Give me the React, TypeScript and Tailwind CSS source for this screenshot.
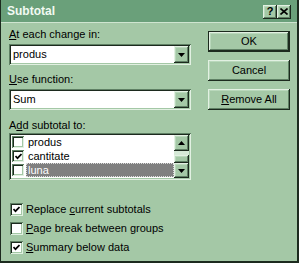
const raised =
  "shadow-[inset_-1px_-1px_#1c2a1e,inset_1px_1px_#e2f0e2,inset_-2px_-2px_#5f8064,inset_2px_2px_#b9d8bb]";
const sunken =
  "shadow-[inset_1px_1px_#5f8064,inset_-1px_-1px_#e2f0e2,inset_2px_2px_#1c2a1e,inset_-2px_-2px_#a4c8a6]";

function Arrow({ up }: { up?: boolean }) {
  return (
    <svg width="7" height="4" viewBox="0 0 7 4">
      <path d={up ? "M3.5 0 L7 4 L0 4 Z" : "M0 0 L7 0 L3.5 4 Z"} fill="#000" />
    </svg>
  );
}

function Check({ on, size = 13 }: { on?: boolean; size?: number }) {
  return (
    <div
      className={"bg-white flex items-center justify-center shrink-0 " + sunken}
      style={{ width: size, height: size }}
    >
      {on && (
        <svg width="7" height="7" viewBox="0 0 7 7">
          <path d="M0.5 3 L2.5 5.2 L6.5 1" stroke="#000" strokeWidth="1.7" fill="none" />
        </svg>
      )}
    </div>
  );
}

function Combo({ value }: { value: string }) {
  return (
    <div className={"h-[21px] w-[182px] bg-white flex items-center pl-[4px] pr-[2px] " + sunken}>
      <span className="flex-1">{value}</span>
      <div className={"w-[15px] h-[17px] bg-[#a4c8a6] flex items-center justify-center " + raised}>
        <Arrow />
      </div>
    </div>
  );
}

function Button({ children, isDefault }: { children: React.ReactNode; isDefault?: boolean }) {
  return (
    <div
      className={
        "h-[21px] w-[82px] flex items-center justify-center " +
        (isDefault ? "border border-[#1c2a1e] " : "") +
        raised
      }
    >
      {children}
    </div>
  );
}

export default function App() {
  const items = [
    { name: "produs", on: false },
    { name: "cantitate", on: true },
    { name: "luna", on: false, selected: true },
  ];

  return (
    <div className="w-[299px] h-[263px] bg-[#a4c8a6] font-['Liberation_Sans',Arial,sans-serif] text-[11px] leading-[13px] text-black border-l border-r-2 border-b-2 border-[#1c2a1e] flex flex-col overflow-hidden">
      {/* title bar */}
      <div className="h-[22px] bg-[#6aa07a] flex items-center pl-[6px] pr-[6px] shrink-0">
        <span className="font-bold text-[12px] text-[#f2faf2]">Subtotal</span>
        <div className="ml-auto flex mt-[1px]">
          <div className={"w-[14px] h-[14px] bg-[#a4c8a6] flex items-center justify-center font-bold text-[11px] " + raised}>
            ?
          </div>
          <div className={"w-[14px] h-[14px] bg-[#a4c8a6] flex items-center justify-center " + raised}>
            <svg width="8" height="7" viewBox="0 0 8 7">
              <path d="M0.5 0.5 L7.5 6.5 M7.5 0.5 L0.5 6.5" stroke="#000" strokeWidth="1.6" />
            </svg>
          </div>
        </div>
      </div>
      <div className="h-px bg-[#cfe5d0] shrink-0" />

      <div className="flex pl-[8px]">
        {/* left column */}
        <div className="w-[182px] flex flex-col">
          <p className="mt-[5px]">
            <u>A</u>t each change in:
          </p>
          <div className="mt-[3px]">
            <Combo value="produs" />
          </div>

          <p className="mt-[8px]">
            <u>U</u>se function:
          </p>
          <div className="mt-[3px]">
            <Combo value="Sum" />
          </div>

          <p className="mt-[9px]">
            A<u>d</u>d subtotal to:
          </p>

          {/* list box */}
          <div className={"mt-[1px] h-[47px] bg-white flex p-[2px] " + sunken}>
            <div className="flex-1 flex flex-col">
              {items.map((it) => (
                <div key={it.name} className="h-[14px] flex items-center pl-[1px]">
                  <Check on={it.on} size={12} />
                  <span
                    className={
                      "ml-[2px] flex-1 h-[14px] pl-[1px] flex items-center " +
                      (it.selected ? "bg-[#808080] text-white border border-dotted border-[#dcdcdc]" : "border border-transparent")
                    }
                  >
                    {it.name}
                  </span>
                </div>
              ))}
            </div>
            {/* scrollbar */}
            <div className="w-[15px] flex flex-col">
              <div className={"h-[16px] bg-[#a4c8a6] flex items-center justify-center " + raised}>
                <Arrow up />
              </div>
              <div className="h-[4px] bg-[#d6e9d7]" />
              <div className={"h-[8px] bg-[#a4c8a6] " + raised} />
              <div className={"h-[15px] bg-[#a4c8a6] flex items-center justify-center " + raised}>
                <Arrow />
              </div>
            </div>
          </div>

          {/* options */}
          <div className="mt-[20px] flex flex-col">
            <div className="h-[19px] flex items-center pl-[1px] gap-[3px]">
              <Check on />
              <span>
                Replace <u>c</u>urrent subtotals
              </span>
            </div>
            <div className="h-[19px] flex items-center pl-[1px] gap-[3px]">
              <Check />
              <span>
                <u>P</u>age break between groups
              </span>
            </div>
            <div className="h-[19px] flex items-center pl-[1px] gap-[3px]">
              <Check on />
              <span>
                <u>S</u>ummary below data
              </span>
            </div>
          </div>
        </div>

        {/* right column */}
        <div className="ml-[17px] flex flex-col">
          <div className="mt-[8px]">
            <Button isDefault>OK</Button>
          </div>
          <div className="mt-[8px]">
            <Button>Cancel</Button>
          </div>
          <div className="mt-[8px]">
            <Button>
              <span>
                <u>R</u>emove All
              </span>
            </Button>
          </div>
        </div>
      </div>
    </div>
  );
}
